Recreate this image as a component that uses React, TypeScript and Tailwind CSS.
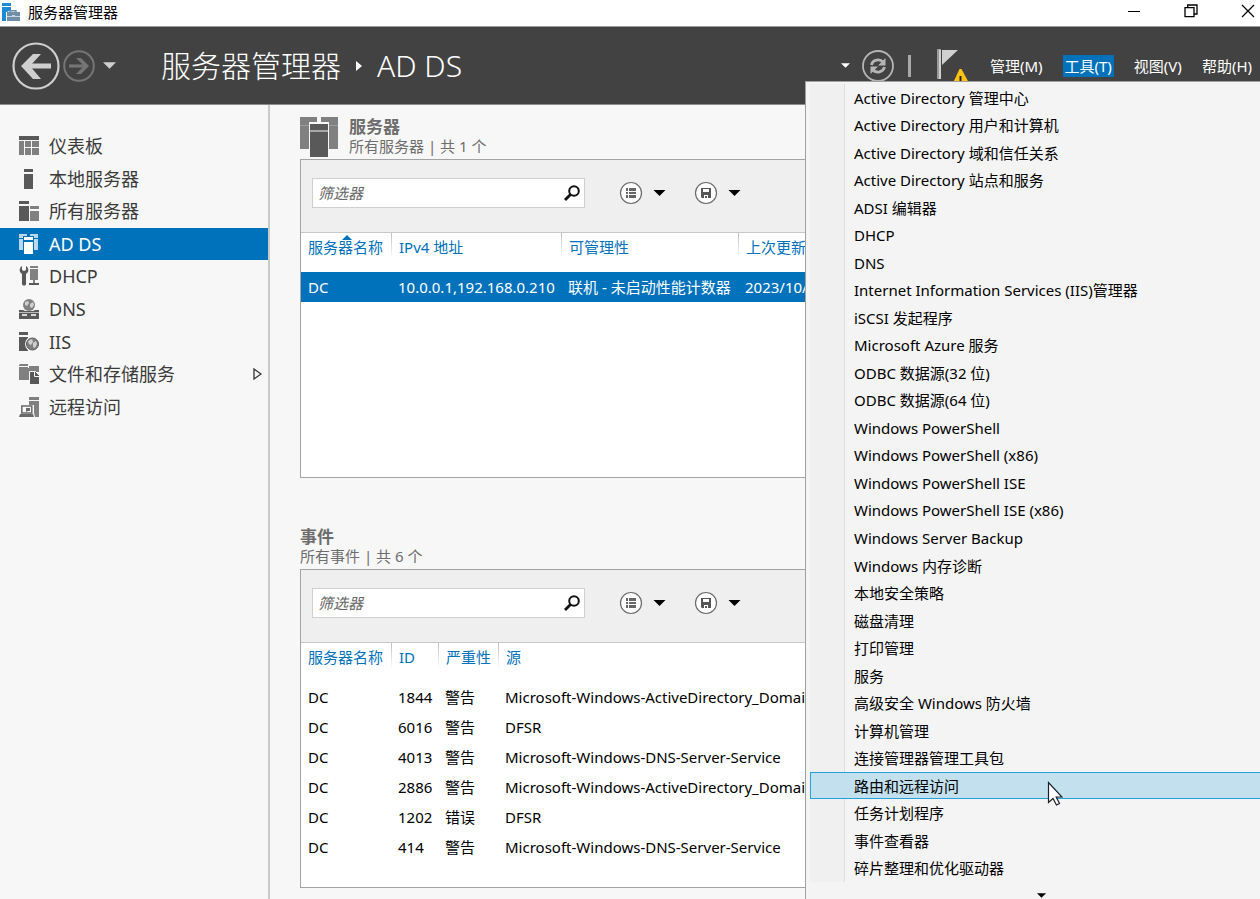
import { useState } from "react";

type IconProps = { className?: string };

interface NavItem {
  label: string;
  icon: React.FC<IconProps>;
  expandable?: boolean;
}

const DashboardIcon: React.FC<IconProps> = ({ className }) => (
  <svg viewBox="0 0 20 20" className={className} aria-hidden="true">
    <path fill="#595959" d="M0 0h20v4H0z" />
    <path fill="#808080" d="M0 5h5v14H0zM6 5h6v6H6zM13 5h7v6h-7zM6 12h6v7H6zM13 12h7v7h-7z" />
  </svg>
);

const LocalServerIcon: React.FC<IconProps> = ({ className }) => (
  <svg viewBox="0 0 20 20" className={className} aria-hidden="true">
    <path fill="#595959" d="M5 0h9v3H5zM5 5h9v15H5z" />
  </svg>
);

const AllServersIcon: React.FC<IconProps> = ({ className }) => (
  <svg viewBox="0 0 20 20" className={className} aria-hidden="true">
    <path fill="#595959" d="M0 0h10v3H0zM0 5h10v15H0z" />
    <path fill="#808080" d="M11 5h9v3h-9zM11 10h9v10h-9z" />
  </svg>
);

const AdDsIcon: React.FC<IconProps> = ({ className }) => (
  <svg viewBox="0 0 20 20" className={className} aria-hidden="true">
    <path fill="#b9d7ee" d="M0 0h8v2H4v2H0zM0 5h4v11H0zM11 0h8v4h-4V2h-4zM15 5h4v11h-4z" />
    <path fill="#fff" d="M5 3h9v3H5zM5 8h9v12H5z" />
  </svg>
);

const DhcpIcon: React.FC<IconProps> = ({ className }) => (
  <svg viewBox="0 0 20 20" className={className} aria-hidden="true">
    <path fill="#595959" d="M3 0v4l2 1 2-1V0c2 1 3 4 2 6L7 8v10c0 2-4 2-4 0V8L1 6c-1-2 0-5 2-6z" />
    <path fill="#808080" d="M11 0h8v2h-8zM11 3h8v11h-8zM14 14h2v3h-2z" />
    <path fill="#595959" d="M10 17h10v2H10z" />
  </svg>
);

const DnsIcon: React.FC<IconProps> = ({ className }) => (
  <svg viewBox="0 0 20 20" className={className} aria-hidden="true">
    <circle cx="10" cy="6" r="6" fill="#808080" />
    <path fill="#d0d0d0" d="M6 3l3-1 1 2-2 3-2-1zM11 5l3-2 1 3-2 3-2-1z" />
    <path fill="#595959" d="M0 11h4l2 1h8l2-1h4v9H0z" />
    <path fill="#d8d8d8" d="M3 15h5v2H3zM12 15h5v2h-5zM0 13h20v.7H0z" />
  </svg>
);

const IisIcon: React.FC<IconProps> = ({ className }) => (
  <svg viewBox="0 0 20 20" className={className} aria-hidden="true">
    <path fill="#595959" d="M0 0h9v3H0zM0 5h9v14H0z" />
    <circle cx="13.5" cy="12" r="7.5" fill="#f7f7f7" />
    <circle cx="13.5" cy="12" r="6" fill="#808080" stroke="#595959" />
    <path fill="#d0d0d0" d="M9 9l4-2 1 3-2 3-2-1zM14 11l3-2 1 3-2 4-2-1z" />
  </svg>
);

const StorageIcon: React.FC<IconProps> = ({ className }) => (
  <svg viewBox="0 0 20 20" className={className} aria-hidden="true">
    <path fill="#808080" d="M1 0h8v2H0V1zM0 3h9v13H0zM10 2h10v6H10zM9 4h3v12H9z" />
    <path fill="#595959" stroke="#f7f7f7" d="M10.500 7.500h6l4 4v9h-10z" />
    <path fill="none" stroke="#f7f7f7" d="M15.500 8v4.500H20" />
  </svg>
);

const RemoteAccessIcon: React.FC<IconProps> = ({ className }) => (
  <svg viewBox="0 0 20 20" className={className} aria-hidden="true">
    <path fill="#808080" d="M10 0h10v3H10zM10 4h10v16h-4l-1-4V8h-5z" />
    <path fill="none" stroke="#6a6a6a" strokeWidth="1.500" d="M2.800 9h10v7h-10z" />
    <path fill="#6a6a6a" d="M1 17h13l1 3H0zM7 11h4v3H9l-2 1z" />
  </svg>
);

const navItems: NavItem[] = [
  { label: "仪表板", icon: DashboardIcon },
  { label: "本地服务器", icon: LocalServerIcon },
  { label: "所有服务器", icon: AllServersIcon },
  { label: "AD DS", icon: AdDsIcon },
  { label: "DHCP", icon: DhcpIcon },
  { label: "DNS", icon: DnsIcon },
  { label: "IIS", icon: IisIcon },
  { label: "文件和存储服务", icon: StorageIcon, expandable: true },
  { label: "远程访问", icon: RemoteAccessIcon },
];

const tools = [
  "Active Directory 管理中心",
  "Active Directory 用户和计算机",
  "Active Directory 域和信任关系",
  "Active Directory 站点和服务",
  "ADSI 编辑器",
  "DHCP",
  "DNS",
  "Internet Information Services (IIS)管理器",
  "iSCSI 发起程序",
  "Microsoft Azure 服务",
  "ODBC 数据源(32 位)",
  "ODBC 数据源(64 位)",
  "Windows PowerShell",
  "Windows PowerShell (x86)",
  "Windows PowerShell ISE",
  "Windows PowerShell ISE (x86)",
  "Windows Server Backup",
  "Windows 内存诊断",
  "本地安全策略",
  "磁盘清理",
  "打印管理",
  "服务",
  "高级安全 Windows 防火墙",
  "计算机管理",
  "连接管理器管理工具包",
  "路由和远程访问",
  "任务计划程序",
  "事件查看器",
  "碎片整理和优化驱动器",
];

const events = [
  { server: "DC", id: 1844, severity: "警告", source: "Microsoft-Windows-ActiveDirectory_DomainService" },
  { server: "DC", id: 6016, severity: "警告", source: "DFSR" },
  { server: "DC", id: 4013, severity: "警告", source: "Microsoft-Windows-DNS-Server-Service" },
  { server: "DC", id: 2886, severity: "警告", source: "Microsoft-Windows-ActiveDirectory_DomainService" },
  { server: "DC", id: 1202, severity: "错误", source: "DFSR" },
  { server: "DC", id: 414, severity: "警告", source: "Microsoft-Windows-DNS-Server-Service" },
];

const Caret: React.FC<IconProps> = ({ className }) => (
  <svg viewBox="0 0 12 6" className={className} aria-hidden="true">
    <path fill="currentColor" d="M0 0h12L6 6z" />
  </svg>
);

const TitleBar: React.FC = () => (
  <div className="flex h-[27px] shrink-0 items-center justify-between border-b border-[#9a9a9a] bg-white pl-[2px] pr-[5px] text-black">
    <div className="flex items-center gap-2 pb-[2px]">
      <svg viewBox="0 0 18 18" className="h-[18px] w-[18px]" aria-hidden="true">
        <path fill="#1e8ad6" d="M0 0h9v3H0zM0 4h9v3L5 9H4v9H0z" />
        <path fill="none" stroke="#6f8fa8" strokeWidth="1.500" d="M8 10V7.800h6V10" />
        <path fill="#6f8fa8" d="M5 9h13v4H5zM5 14h13v4H5z" />
        <path fill="#c8d6e0" d="M5 13h13v1H5zM10 12h3v2h-3z" />
      </svg>
      <span>服务器管理器</span>
    </div>
    <div className="flex items-center gap-[43px] pb-[5px]">
      <button aria-label="最小化">
        <svg viewBox="0 0 14 14" className="h-[14px] w-[14px]">
          <path stroke="#000" d="M1 7.500h12" />
        </svg>
      </button>
      <button aria-label="还原">
        <svg viewBox="0 0 14 14" className="h-[14px] w-[14px]" fill="none" stroke="#000" strokeWidth="1.300">
          <path d="M1 3.700h9v9H1zM3.700 3.700V1H13v9h-3" />
        </svg>
      </button>
      <button aria-label="关闭">
        <svg viewBox="0 0 14 14" className="h-[14px] w-[14px]" stroke="#000" strokeWidth="1.200">
          <path d="M1 1l12 12M13 1L1 13" />
        </svg>
      </button>
    </div>
  </div>
);

const Header: React.FC<{ toolsOpen: boolean; onToggleTools: () => void }> = ({ toolsOpen, onToggleTools }) => (
  <header className="flex h-[78px] shrink-0 items-center justify-between border-b border-[#8c8c8c] bg-[#424242] pl-3 pr-2 text-white">
    <div className="flex items-center">
      <button aria-label="后退">
        <svg viewBox="0 0 48 48" className="h-12 w-12" fill="none" stroke="#cfcfcf">
          <circle cx="24" cy="24" r="22.500" strokeWidth="2.200" />
          <path strokeWidth="5" d="M39 24H13" />
          <path fill="#cfcfcf" stroke="none" d="M21 12h8L18 24l11 13h-8L9 24z" />
        </svg>
      </button>
      <button aria-label="前进" className="ml-[3px]">
        <svg viewBox="0 0 32 32" className="h-8 w-8" fill="none" stroke="#757575">
          <circle cx="16" cy="16" r="14.800" strokeWidth="2" />
          <path strokeWidth="3.200" d="M6 16h17" />
          <path fill="#757575" stroke="none" d="M13 8h5l8 8-8 8h-5l8-8z" />
        </svg>
      </button>
      <button aria-label="历史记录" className="ml-2">
        <Caret className="h-[7px] w-[13px] text-[#cfcfcf]" />
      </button>
      <h1 className="ml-[45px] flex items-center gap-[15px] text-[30px] leading-10 font-light whitespace-nowrap">
        <span>服务器管理器</span>
        <svg viewBox="0 0 6 10" className="h-[10px] w-[6px]" aria-hidden="true">
          <path fill="#fff" d="M0 0l6 5-6 5z" />
        </svg>
        <span>AD DS</span>
      </h1>
    </div>

    <div className="flex items-center">
      <button aria-label="刷新选项">
        <Caret className="h-[5px] w-[9px] text-white" />
      </button>
      <button aria-label="刷新" className="ml-3">
        <svg viewBox="0 0 32 32" className="h-8 w-8" fill="none" stroke="#b5b5b5">
          <circle cx="16" cy="16" r="15" strokeWidth="1.800" />
          <path strokeWidth="2.800" d="M9.500 15c1-5 8-7 12-2.500M22.500 17c-1 5-8 7-12 2.500" />
          <path fill="#b5b5b5" stroke="none" d="M23.500 8v7.500H16zM8.500 24v-7.500H16z" />
        </svg>
      </button>
      <span className="ml-[14px] h-[22px] w-[3px] bg-[#a8a8a8]" />
      <button aria-label="通知" className="ml-[26px]">
        <svg viewBox="0 0 32 34" className="h-[34px] w-8">
          <path fill="#9a9a9a" d="M0 0h4v30H0z" />
          <path fill="#d0d0d0" d="M2 1h2v29H2zM5 1h16L5 16z" />
          <path fill="#ffc20e" d="M22.500 20h2L32 34H16z" />
          <path fill="#222" d="M22.500 27h2v7h-2z" />
        </svg>
      </button>
      <nav className="ml-[21px] flex items-center gap-5">
        <button>管理(M)</button>
        <button
          onClick={onToggleTools}
          aria-expanded={toolsOpen}
          className={`px-[2px] leading-[22px] ${toolsOpen ? "bg-[#0072bc]" : ""}`}
        >
          工具(T)
        </button>
        <button>视图(V)</button>
        <button>帮助(H)</button>
      </nav>
    </div>
  </header>
);

const Sidebar: React.FC<{ active: string; onSelect: (label: string) => void }> = ({ active, onSelect }) => (
  <aside className="w-[270px] shrink-0 border-r-2 border-[#cacaca] pt-[25px]">
    <nav className="grid h-[293px] auto-rows-fr text-lg text-[#3b3b3b]">
      {navItems.map(({ label, icon: Icon, expandable }) => (
        <button
          key={label}
          onClick={() => onSelect(label)}
          className={`flex items-center pr-[6px] pl-[19px] text-left leading-6 ${active === label ? "bg-[#0072bc] text-white" : ""}`}
        >
          <Icon className="mr-[10px] h-5 w-5" />
          {label}
          {expandable && (
            <svg viewBox="0 0 9 12" className="ml-auto h-3 w-[9px]" aria-hidden="true">
              <path fill="none" stroke="#333" strokeWidth="1.300" d="M1 1l7 5-7 5z" />
            </svg>
          )}
        </button>
      ))}
    </nav>
  </aside>
);

const FilterBar: React.FC<{ label: string }> = ({ label }) => (
  <div className="flex h-[73px] items-center border-b border-[#c8c8c8] bg-[#efefef] pb-[6px] pl-[11px] text-black">
    <div className="flex h-[30px] w-[273px] items-center border border-[#cfcfcf] bg-white pr-1">
      <input
        aria-label={label}
        placeholder="筛选器"
        className="min-w-0 flex-1 px-[5px] leading-5 italic outline-none placeholder:text-[#666]"
      />
      <button aria-label="搜索">
        <svg viewBox="0 0 16 16" className="h-4 w-4" fill="none" stroke="#111">
          <circle cx="10" cy="6" r="4.800" strokeWidth="2" />
          <path strokeWidth="2.800" d="M6.500 9.500L1 15" />
        </svg>
      </button>
    </div>
    <button aria-label="查询条件" className="ml-[34px] flex items-center gap-[10px]">
      <svg viewBox="0 0 24 24" className="h-6 w-6">
        <circle cx="12" cy="12" r="10.500" fill="#fff" stroke="#6b6b6b" strokeWidth="1.200" />
        <path fill="#666" d="M7 7h2v3H7zM10 7h7v3h-7zM7 11h2v2H7zM10 11h7v2h-7zM7 14h2v3H7zM10 14h7v3h-7z" />
      </svg>
      <Caret className="h-[6px] w-[13px]" />
    </button>
    <button aria-label="保存查询" className="ml-7 flex items-center gap-[10px]">
      <svg viewBox="0 0 24 24" className="h-6 w-6">
        <circle cx="12" cy="12" r="10.500" fill="#fff" stroke="#6b6b6b" strokeWidth="1.200" />
        <path fill="#555" fillRule="evenodd" d="M7 7h10v10H8l-1-1zM9 8v3h6V8zM10 14v3h1v-2h2v2h1v-3z" />
      </svg>
      <Caret className="h-[6px] w-[13px]" />
    </button>
  </div>
);

const HeaderCell: React.FC<{ children: React.ReactNode; first?: boolean; sorted?: boolean }> = ({ children, first, sorted }) => (
  <th
    scope="col"
    className={`relative h-[39px] overflow-visible pb-3 text-left font-normal text-[#0072bc] ${
      first ? "pl-[7px]" : "bg-[linear-gradient(#bdbdbd,#ffffff)] bg-[length:1px_26px] bg-no-repeat pl-2"
    }`}
  >
    {children}
    {sorted && (
      <svg viewBox="0 0 10 5" className="absolute top-[2px] left-[41px] h-[5px] w-[10px]" aria-hidden="true">
        <path fill="#0072bc" d="M5 0l5 5H0z" />
      </svg>
    )}
  </th>
);

const ServersPanel: React.FC = () => (
  <section>
    <div className="mb-[2px] flex h-10 gap-[11px]">
      <svg viewBox="0 0 38 40" className="h-10 w-[38px]" aria-hidden="true">
        <path fill="#808080" d="M0 0h17v5H9v27H0zM21 0h17v32h-9V5h-8z" />
        <path fill="#9c9c9c" d="M0 8h9v1H0zM29 8h9v1h-9z" />
        <path fill="#595959" d="M10 7h18v33H10z" />
        <path fill="#a8a8a8" d="M10 13h18v2H10z" />
      </svg>
      <div className="text-[#6d6d6d]">
        <h2 className="text-[17px] leading-[19px] font-semibold">服务器</h2>
        <p>所有服务器 | 共 1 个</p>
      </div>
    </div>
    <div className="h-[319px] border border-[#a3a3a3] bg-white">
      <FilterBar label="筛选服务器" />
      <table className="w-full table-fixed whitespace-nowrap">
        <colgroup>
          <col className="w-[90px]" />
          <col className="w-[170px]" />
          <col className="w-[177px]" />
          <col />
        </colgroup>
        <thead>
          <tr>
            <HeaderCell first sorted>服务器名称</HeaderCell>
            <HeaderCell>IPv4 地址</HeaderCell>
            <HeaderCell>可管理性</HeaderCell>
            <HeaderCell>上次更新</HeaderCell>
          </tr>
        </thead>
        <tbody>
          <tr className="h-[30px] bg-[#0072bc] text-white">
            <td className="pl-[7px]">DC</td>
            <td className="pl-[7px]">10.0.0.1,192.168.0.210</td>
            <td className="pl-[7px]">联机 - 未启动性能计数器</td>
            <td className="pl-[7px]">2023/10/</td>
          </tr>
        </tbody>
      </table>
    </div>
  </section>
);

const EventsPanel: React.FC = () => (
  <section>
    <div className="mb-[2px] h-10 text-[#6d6d6d]">
      <h2 className="text-[17px] leading-[19px] font-semibold">事件</h2>
      <p>所有事件 | 共 6 个</p>
    </div>
    <div className="h-[319px] border border-[#a3a3a3] bg-white">
      <FilterBar label="筛选事件" />
      <table className="w-full table-fixed whitespace-nowrap">
        <colgroup>
          <col className="w-[90px]" />
          <col className="w-[47px]" />
          <col className="w-[60px]" />
          <col />
        </colgroup>
        <thead>
          <tr>
            <HeaderCell first>服务器名称</HeaderCell>
            <HeaderCell>ID</HeaderCell>
            <HeaderCell>严重性</HeaderCell>
            <HeaderCell>源</HeaderCell>
          </tr>
        </thead>
        <tbody className="text-black">
          {events.map((event) => (
            <tr key={event.id} className="h-[30px]">
              <td className="pl-[7px]">{event.server}</td>
              <td className="pl-[7px]">{event.id}</td>
              <td className="pl-[7px]">{event.severity}</td>
              <td className="pl-[7px]">{event.source}</td>
            </tr>
          ))}
        </tbody>
      </table>
    </div>
  </section>
);

const ToolsMenu: React.FC<{ highlighted: string; onHighlight: (tool: string) => void }> = ({ highlighted, onHighlight }) => (
  <div className="absolute top-[81px] right-0 bottom-0 flex w-[455px] flex-col border-t border-l border-[#a0a0a0] bg-[#f4f4f4] pt-[2px] pl-1 text-black">
    <ul role="menu" className="flex min-h-0 flex-1 flex-col bg-[linear-gradient(90deg,#f0f0f0_34px,#dedede_34px,#dedede_35px,#f4f4f4_35px)]">
      {tools.map((tool) => (
        <li key={tool} role="none" className="flex min-h-0 flex-1">
          <button
            role="menuitem"
            onMouseEnter={() => onHighlight(tool)}
            className={`flex flex-1 items-center border border-r-0 pl-[43px] text-left ${
              tool === highlighted ? "border-[#26a0da] bg-[#c2e0ee]" : "border-transparent"
            }`}
          >
            {tool}
          </button>
        </li>
      ))}
    </ul>
    <div className="flex h-[17px] shrink-0 items-end justify-center pb-[1px] pl-3">
      <Caret className="h-[5px] w-[9px]" />
    </div>
    <svg viewBox="0 0 16 25" className="absolute top-[699px] left-[241px] h-[25px] w-4" aria-hidden="true">
      <path fill="#fff" stroke="#1d1d2b" strokeWidth="1.200" d="M1.500 1.500v20l4.500-4 3.500 6.500 3-1.500-3.300-6.500h5.800z" />
    </svg>
  </div>
);

const App: React.FC = () => {
  const [active, setActive] = useState("AD DS");
  const [toolsOpen, setToolsOpen] = useState(true);
  const [highlighted, setHighlighted] = useState("路由和远程访问");

  return (
    <div className="relative flex h-screen flex-col overflow-hidden bg-[#f7f7f7] font-['Noto_Sans','Noto_Sans_CJK_SC',sans-serif] text-[15px] leading-5">
      <TitleBar />
      <Header toolsOpen={toolsOpen} onToggleTools={() => setToolsOpen(!toolsOpen)} />
      <div className="flex min-h-0 flex-1">
        <Sidebar active={active} onSelect={setActive} />
        <main className="flex min-w-0 flex-1 flex-col gap-[49px] pt-3 pl-[30px]">
          <ServersPanel />
          <EventsPanel />
        </main>
      </div>
      {toolsOpen && <ToolsMenu highlighted={highlighted} onHighlight={setHighlighted} />}
    </div>
  );
};

export default App;
